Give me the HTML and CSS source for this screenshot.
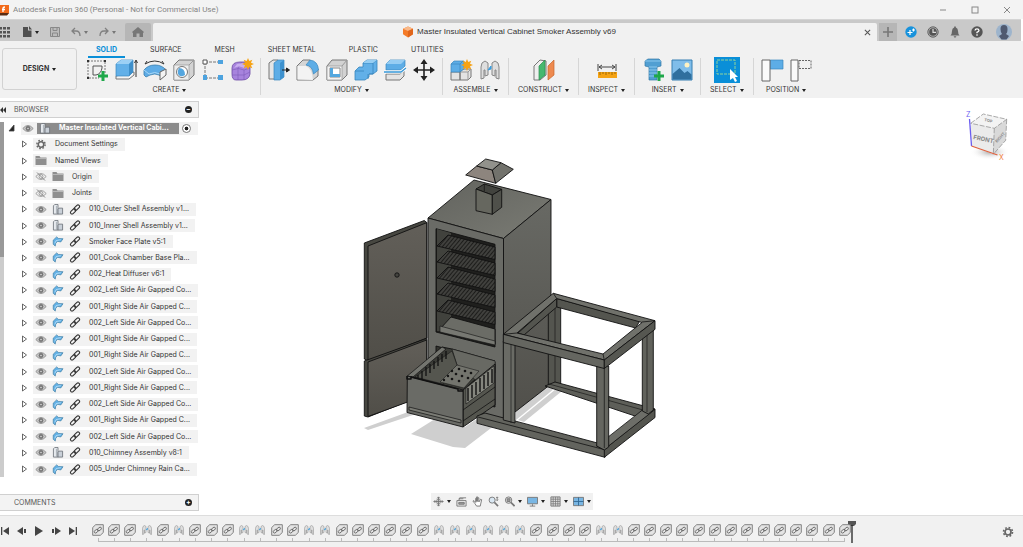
FILE: index.html
```html
<!DOCTYPE html>
<html lang="en">
    <head>
        <meta charset="UTF-8" />
        <meta name="viewport" content="width=device-width, initial-scale=1.0" />
        <title>Autodesk Fusion 360</title>
        <link rel="stylesheet" href="styles.css" />
    </head>
    <body>
        <!-- icons -->
        <svg class="sprite" aria-hidden="true">
            <symbol id="eye" viewBox="0 0 12 10">
                <path d="M.8 5Q6-1 11.200 5 6 11 .8 5z" fill="#c8c8c8" stroke="#959595" />
                <circle cx="6" cy="5" r="2.400" fill="#777" />
                <circle cx="6" cy="5" r=".8" fill="#ddd" />
            </symbol>
            <symbol id="eye-off" viewBox="0 0 12 10">
                <path d="M.8 5Q6-1 11.200 5 6 11 .8 5z" fill="none" stroke="#999" stroke-width=".9" />
                <circle cx="6" cy="5" r="2" fill="none" stroke="#999" stroke-width=".9" />
                <path d="M2 1l8 8" stroke="#888" />
            </symbol>
            <symbol id="folder" viewBox="0 0 12 10">
                <path d="M.5.5h4l1 1.500h6V9.500H.5z" fill="#8f8f8f" />
                <path d="M.5 3h11" stroke="#c8c8c8" stroke-width=".7" />
            </symbol>
            <symbol id="gear" viewBox="0 0 12 12">
                <circle cx="6" cy="6" r="3" fill="none" stroke="#666" stroke-width="1.700" />
                <circle cx="6" cy="6" r="4.500" fill="none" stroke="#666" stroke-width="1.600" stroke-dasharray="1.750 1.784" />
            </symbol>
            <symbol id="assembly" viewBox="0 0 12 12">
                <path d="M1 2l1.500-1.500H6V11H1z" fill="#e6eaee" stroke="#6b7178" stroke-width=".9" />
                <path d="M4.300 2v9" stroke="#9aa1a8" stroke-width=".8" />
                <path d="M6 6l1-1.500h4V11H6z" fill="#c9d0d8" stroke="#6b7178" stroke-width=".9" />
            </symbol>
            <symbol id="sheet" viewBox="0 0 12 12">
                <path d="M.8 4.500L4.500 1l2 1.700 5 .3-2.500 3.500-3.500-.7L3.500 8l-.5 3L.8 9z" fill="#62b1e6" stroke="#39789f" stroke-width=".7" />
                <path d="M2.500 8L4 5l5-1" fill="none" stroke="#d4ecfa" stroke-width=".7" />
            </symbol>
            <symbol id="link" viewBox="0 0 12 12">
                <g fill="none" stroke="#333" stroke-width="1.200">
                    <rect x="4.500" y="2.300" width="7" height="3.400" rx="1.700" transform="rotate(-45 8 4)" />
                    <rect x=".5" y="6.300" width="7" height="3.400" rx="1.700" transform="rotate(-45 4 8)" />
                </g>
            </symbol>
            <symbol id="tl-link" viewBox="0 0 12 12">
                <path d="M.7 3.500l3-2.800h7.600v7.800l-3 2.800H.7z" fill="#e4e4e4" stroke="#777" stroke-width=".9" />
                <g fill="none" stroke="#5e5e5e" stroke-width=".8">
                    <ellipse cx="4.200" cy="7.200" rx="2.200" ry="1.400" transform="rotate(-40 4.200 7.200)" />
                    <ellipse cx="7.500" cy="5" rx="2.200" ry="1.400" transform="rotate(-40 7.500 5)" />
                </g>
            </symbol>
            <symbol id="joint" viewBox="0 0 24 24">
                <path d="M3 21V9q0-5 4-6l3 2v12l-3 1v-6H6v8z" fill="#dedede" stroke="#868686" />
                <path d="M21 21V9q0-5-4-6l-3 2v12l3 1v-6h1v8z" fill="#dedede" stroke="#868686" />
                <path d="M13 8l-3 4 3-1z" fill="#3b9ddd" stroke="#3b9ddd" />
            </symbol>
            <symbol id="plus" viewBox="0 0 10 10">
                <path d="M5 0v10M0 5h10" stroke="#1fa84a" stroke-width="3" />
            </symbol>
            <symbol id="spark" viewBox="0 0 12 12">
                <path d="M6 0l1.300 3 3-1.300L9 4.700 12 6 9 7.300l1.300 3L7.300 9 6 12 4.700 9l-3 1.300L3 7.300 0 6l3-1.300-1.300-3 3 1.300z" fill="#f6a315" />
            </symbol>
        </svg>

        <header class="titlebar">
            <svg class="logo" viewBox="0 0 10 12"><path d="M0 1h9v8l-2 2H0z" fill="#f26a1b" /><path d="M0 9h9l-2 2.500H0z" fill="#5a2b12" /><path d="M3 8V4.500q0-1.500 2-1.500M2 5.500h3" fill="none" stroke="#fff" stroke-width="1.300" /></svg>
            <span class="app_name">Autodesk Fusion 360 (Personal - Not for Commercial Use)</span>
            <div class="win_btns">
                <button aria-label="Minimize"><svg viewBox="0 0 8 8"><path d="M1 4h6" /></svg></button>
                <button aria-label="Maximize"><svg viewBox="0 0 8 8"><rect x="1" y="1" width="6" height="6" /></svg></button>
                <button aria-label="Close window"><svg viewBox="0 0 8 8"><path d="M1 1l6 6M7 1L1 7" /></svg></button>
            </div>
        </header>

        <div class="docbar">
            <div class="quick">
                <button aria-label="Data panel"><svg width="11" height="12" viewBox="1 0 11 12" fill="#555"><path d="M0 1h3v2.500H0zM4 1h3v2.500H4zM8 1h3v2.500H8zM0 5h3v2.500H0zM4 5h3v2.500H4zM8 5h3v2.500H8zM0 9h3v2.500H0zM4 9h3v2.500H4zM8 9h3v2.500H8z" /></svg></button>
                <button class="caret" aria-label="File"><svg width="10" height="12" viewBox="0 0 10 12"><path d="M1 1h5v3.500h3.500V11H1z" fill="#505050" /><path d="M7 0l3 3.500H7z" fill="#505050" /></svg></button>
                <button aria-label="Save"><svg width="10" height="10" viewBox="0 0 10 10"><path d="M.5.5h9v9h-9z" fill="#bbb" stroke="#888" /><path d="M3 .5v3h4v-3M2.500 9.500V6h5v3.500" fill="none" stroke="#888" /></svg></button>
                <button class="caret light" aria-label="Undo"><svg width="10" height="10" viewBox="0 0 10 10"><path d="M4 1L1 4l3 3M1 4h4q4 0 4 5" fill="none" stroke="#808080" stroke-width="1.300" /></svg></button>
                <button class="caret light" aria-label="Redo"><svg width="10" height="10" viewBox="0 0 10 10"><path d="M6 1l3 3-3 3M9 4H5Q1 4 1 9" fill="none" stroke="#808080" stroke-width="1.300" /></svg></button>
            </div>
            <button class="home" aria-label="Home"><svg width="12" height="10" viewBox="0 0 12 10"><path d="M6 0l6 5-1 1v4H7.500V6.500h-3V10H1V6L0 5z" fill="#777" /></svg></button>
            <div class="doc_tab">
                <svg width="12" height="12" viewBox="0 0 12 12"><path d="M6 .5l5 2.200v5.600l-5 3.200-5-3.200V2.700z" fill="#f47b28" /><path d="M6 .5l5 2.200L6 5 1 2.700z" fill="#f9b98a" /><path d="M6 5l5-2.300v5.600l-5 3.200z" fill="#e0661c" /></svg>
                <span>Master Insulated Vertical Cabinet Smoker Assembly v69</span>
                <button class="close" aria-label="Close document"><svg width="7" height="7" viewBox="0 0 8 8"><path d="M1 1l6 6M7 1L1 7" stroke="#555" stroke-width="1.200" /></svg></button>
            </div>
            <button class="new_tab" aria-label="New tab"><svg width="10" height="10" viewBox="0 0 10 10"><path d="M5 0v10M0 5h10" stroke="#777" stroke-width="1.600" /></svg></button>
            <div class="account">
                <button aria-label="Extensions"><svg width="12" height="12" viewBox="0 0 12 12"><circle cx="6" cy="6" r="5.700" fill="#1792dc" /><path d="M5 4v5M2.500 6.500h5M8.500 2.500v3M7 4h3" stroke="#fff" stroke-width="1.200" /></svg></button>
                <button aria-label="Job status"><svg width="12" height="12" viewBox="0 0 12 12"><circle cx="6" cy="6" r="5.200" fill="#aaa" stroke="#666" /><circle cx="6" cy="6" r="3.800" fill="#555" /><path d="M6 3v3.300h3" fill="none" stroke="#ddd" stroke-width="1.200" /></svg></button>
                <button aria-label="Notifications"><svg width="12" height="12" viewBox="0 0 12 12"><path d="M1.500 9.500Q3 8 3 5q0-3 2.200-3.500V.5h1.600v1Q9 2 9 5q0 3 1.500 4.500zM4.500 10.200h3L6 12z" fill="#666" /></svg></button>
                <button aria-label="Help"><svg width="12" height="12" viewBox="0 0 12 12"><circle cx="6" cy="6" r="5.700" fill="#555" /><path d="M4 4.500Q4.200 2.800 6 2.800T8 4.500Q8 5.500 6 6.300v1M6 8.300v1.500" fill="none" stroke="#fff" stroke-width="1.300" /></svg></button>
                <button class="avatar" aria-label="Profile"><svg width="16" height="16" viewBox="0 0 16 16"><circle cx="8" cy="8" r="8" fill="#9db4cc" /><path d="M4.500 5q0-4 3.500-4t3.500 4-1.500 5l3 2-2.500 3.500h-5L3 12l3-2Q4.500 8 4.500 5z" fill="#4f5a70" /></svg></button>
            </div>
        </div>

        <div class="ribbon">
            <button class="design">DESIGN <i></i></button>
            <div class="ribbon_main">
                <nav class="tabs">
                    <button class="on">SOLID</button>
                    <button>SURFACE</button>
                    <button>MESH</button>
                    <button>SHEET METAL</button>
                    <button>PLASTIC</button>
                    <button>UTILITIES</button>
                </nav>
                <div class="groups">
                    <div class="group">
                        <div class="tools">
                            <button aria-label="Create sketch"><svg viewBox="0 0 24 24"><path d="M3 3h17v13M3 3v17h11" fill="none" stroke="#777" stroke-dasharray="2 1" /><path d="M8 17V8h9v2q-1 6-6 7H8" fill="none" stroke="#555" /><path d="M2 2h2v2H2zM19 2h2v2h-2zM2 19h2v2H2z" fill="#333" /><use href="#plus" x="13" y="13" width="10" height="10" /></svg></button>
                            <button aria-label="Extrude"><svg viewBox="0 0 24 24"><path d="M2 18v3h13l5-4v-3z" fill="#f4f4f4" stroke="#777" /><path d="M2 6l5-4h12v12l-4 4H2z" fill="#62b0e8" stroke="#3987bd" stroke-width=".7" /><path d="M2 6l5-4h12l-4 4z" fill="#9bd0f5" /><path d="M15 6l4-4v12l-4 4z" fill="#3e8fca" /><path d="M22 19V3M20.500 5L22 2l1.500 3" fill="none" stroke="#333" /></svg></button>
                            <button aria-label="Revolve"><svg viewBox="0 0 24 24"><path d="M1 12q4-5 11-5t11 5l-4 3v5l-3-3q-4-2-9 0l-4 2-2-2z" fill="#5eace6" stroke="#397fae" stroke-width=".8" /><path d="M1 12l5 4q6-3 11 0l6-4" fill="none" stroke="#a9d8f7" /><path d="M17 14l6-3v6l-6 5z" fill="#f4f4f4" stroke="#666" /><path d="M2 6q10-6 19 0M2 6l2-3M21 6l-2-3" fill="none" stroke="#333" /></svg></button>
                            <button aria-label="Hole"><svg viewBox="0 0 24 24"><path d="M2 7l5-5h15v15l-5 5H2z" fill="#d3d3d3" stroke="#777" /><path d="M2 7h15v15H2z" fill="#ededed" stroke="#999" stroke-width=".7" /><path d="M17 7l5-5" stroke="#999" /><circle cx="10" cy="14" r="5.500" fill="#fff" stroke="#777" /><path d="M7 10q6 0 6 7-5 3-7-1-1-3 1-6z" fill="#54a6df" /></svg></button>
                            <button aria-label="Pattern"><svg viewBox="0 0 24 24"><path d="M4 4v16h15M4 4h15" fill="none" stroke="#777" stroke-dasharray="3 1" /><path d="M2 2h4v4H2z" fill="#fff" stroke="#555" /><path d="M17 2h5v4h-5zM2 17h4v5H2zM17 17h5v5h-5z" fill="#4da3df" /></svg></button>
                            <button aria-label="Create form"><svg viewBox="0 0 24 24"><path d="M2 10q0-6 8-6h5l5 3v9q-1 6-8 6H6q-4 0-4-6z" fill="#a783dd" stroke="#6d4aa5" stroke-width=".8" /><path d="M2 12q7-3 12 0l6-2M2 17h12l6-3M8 10v12M14 12v10M8 10l4-6" fill="none" stroke="#7d5bb8" stroke-width=".6" /><path d="M4 10q5-3 10 0l5-2-6-3-6 1z" fill="#c9aef0" /><use href="#spark" x="12" y="0" width="12" height="12" /></svg></button>
                        </div>
                        <button class="caret">CREATE</button>
                    </div>
                    <div class="group">
                        <div class="tools">
                            <button aria-label="Press pull"><svg viewBox="0 0 24 24"><path d="M2 5l4-3h5v19H2z" fill="#e5e5e5" stroke="#777" /><path d="M7 5l4-3h6v17l-4 3H7z" fill="#5dade6" stroke="#3987bd" stroke-width=".7" /><path d="M13 5l4-3v17l-4 3z" fill="#3d91ce" /><path d="M15 12h5M19.500 10l3 2-3 2z" stroke="#222" fill="#222" /></svg></button>
                            <button aria-label="Fillet"><svg viewBox="0 0 24 24"><path d="M1 22V8l6-6h7l8 9v7l-5 4z" fill="#d5d5d5" stroke="#777" /><path d="M1.500 21.500V8H10q6 2 7 14z" fill="#f3f3f3" /><path d="M10 7l4-5q8 1 8.500 10l-5 4q-1-8-7.500-9z" fill="#5dade6" stroke="#3987bd" stroke-width=".7" /></svg></button>
                            <button aria-label="Shell"><svg viewBox="0 0 24 24"><path d="M2 8l5-6h15v15l-5 5H2z" fill="#d2d2d2" stroke="#777" /><path d="M2 8h15v14H2z" fill="#f3f3f3" stroke="#999" stroke-width=".8" /><path d="M17 8l5-6" stroke="#999" /><path d="M5 10h10v9H5z" fill="#fff" stroke="#888" /><path d="M5 10h3v6h7v3H5z" fill="#53a7df" /></svg></button>
                            <button aria-label="Combine"><svg viewBox="0 0 24 24"><path d="M1 13l4-4h4V5l4-3h10v11l-4 3h-4v3l-4 3H1z" fill="#62b0e8" stroke="#3987bd" stroke-width=".8" /><path d="M9 5h10v11h-4M19 5l4-3M1 13h9M14 16v5" fill="none" stroke="#3987bd" stroke-width=".8" /><path d="M9 5l4-3h10l-4 3z" fill="#97cef3" /></svg></button>
                            <button aria-label="Split body"><svg viewBox="0 0 24 24"><path d="M3 16h14l4-3v5l-4 4H3z" fill="#e4e4e4" stroke="#777" /><path d="M3 6l4-4h15v6l-4 4H3z" fill="#5dade6" stroke="#3987bd" stroke-width=".7" /><path d="M3 6l4-4h15l-4 4z" fill="#96cdf3" /><path d="M1 14h17l5-4" fill="none" stroke="#fff" stroke-width="3" /><path d="M1 14h17l5-4" fill="none" stroke="#3798d8" stroke-width="1.300" /></svg></button>
                            <button aria-label="Move"><svg viewBox="0 0 24 24"><path d="M12 3v18M3 12h18" stroke="#222" stroke-width="1.600" /><path d="M12 1l3.500 5h-7zM12 23l3.500-5h-7zM1 12l5-3.500v7zM23 12l-5-3.500v7z" fill="#222" /></svg></button>
                        </div>
                        <button class="caret">MODIFY</button>
                    </div>
                    <div class="group">
                        <div class="tools">
                            <button aria-label="New component"><svg viewBox="0 0 24 24"><path d="M2 14h9v8H2zM11 14l3-3h8v8l-3 3h-8z" fill="#e3e3e3" stroke="#777" /><path d="M11 14h8v8M19 14l3-3" fill="none" stroke="#999" /><path d="M2 6l3-3h10v8l-4 3H2z" fill="#5dade6" stroke="#3987bd" stroke-width=".7" /><path d="M2 6h9v8M11 6l3-3" fill="none" stroke="#3987bd" stroke-width=".7" /><use href="#spark" x="12" y="1" width="12" height="12" /></svg></button>
                            <button aria-label="Joint"><svg viewBox="0 0 24 24"><use href="#joint" width="24" height="24" /></svg></button>
                        </div>
                        <button class="caret">ASSEMBLE</button>
                    </div>
                    <div class="group">
                        <div class="tools">
                            <button aria-label="Offset plane"><svg viewBox="0 0 24 24"><path d="M2 8l6-6 6 1v14l-6 5H2z" fill="#eee" stroke="#777" /><path d="M7 8l6-6v15l-6 5z" fill="#47b86f" stroke="#2a8e4e" stroke-width=".7" /><path d="M16 8l6-6v15l-6 5z" fill="#ee8a4f" stroke="#c6642b" stroke-width=".7" /></svg></button>
                        </div>
                        <button class="caret">CONSTRUCT</button>
                    </div>
                    <div class="group">
                        <div class="tools">
                            <button aria-label="Measure"><svg viewBox="0 0 24 24"><path d="M3 6v7M21 6v7M4 9h16M7 7L4 9l3 2M17 7l3 2-3 2" fill="none" stroke="#444" /><path d="M3 14h19v6H3z" fill="#f5a314" /><path d="M5 14v3M8 14v2M11 14v3M14 14v2M17 14v3M20 14v2" stroke="#8c5a00" stroke-width=".8" /></svg></button>
                        </div>
                        <button class="caret">INSPECT</button>
                    </div>
                    <div class="group">
                        <div class="tools">
                            <button aria-label="Insert fastener"><svg viewBox="0 0 24 24"><path d="M4 3l3-2h11l2 2v5l-4 1v13H8V9L4 8z" fill="#519fd2" stroke="#337aa8" stroke-width=".7" /><path d="M4 3h16M8 9h8M8 12h8M8 15h8M8 18h8" stroke="#8cc8ee" /><use href="#plus" x="13" y="13" width="10" height="10" /></svg></button>
                            <button aria-label="Insert image"><svg viewBox="0 0 24 24"><path d="M2 2h20v20H2z" fill="#7fbdea" stroke="#377fb2" /><path d="M2.500 16l7-6 5 5 3-2 4 3.500v5h-19z" fill="#2f6f9e" /><circle cx="17" cy="7" r="2.500" fill="#fff2c2" /></svg></button>
                        </div>
                        <button class="caret">INSERT</button>
                    </div>
                    <div class="group select">
                        <div class="tools">
                            <button aria-label="Select"><svg viewBox="0 0 26 26"><path d="M0 0h26v26H0z" fill="#0a8fd8" /><path d="M3 3h18v14H3z" fill="none" stroke="#8fd39a" stroke-dasharray="3 1" /><path d="M16 12v11l3-2 2 4 2-1-2-4h3z" fill="#fff" /></svg></button>
                        </div>
                        <button class="caret">SELECT</button>
                    </div>
                    <div class="group">
                        <div class="tools">
                            <button aria-label="Capture position"><svg viewBox="0 0 24 24"><path d="M10 2h13v9H10z" fill="#5dade6" stroke="#3987bd" stroke-width=".7" /><path d="M2 2h8v21H2z" fill="#fafafa" stroke="#666" /></svg></button>
                            <button aria-label="Revert position"><svg viewBox="0 0 24 24"><path d="M10 2.500h12v8H10z" fill="none" stroke="#666" stroke-dasharray="2 1" /><path d="M2 2h7v21H2z" fill="#fafafa" stroke="#666" /></svg></button>
                        </div>
                        <button class="caret">POSITION</button>
                    </div>
                </div>
            </div>
        </div>

        <main class="workspace">
            <aside class="panel">
                <div class="panel_head"><svg width="6" height="6" viewBox="0 0 6 6"><path d="M3 0v6L0 3zM6 0v6L3 3z" fill="#333" /></svg><span>BROWSER</span><button aria-label="Collapse browser">&minus;</button></div>
                <div class="tree_wrap">
                    <div class="scroll"></div>
                    <ul class="tree" id="tree"></ul>
                </div>
                <div class="panel_head"><span>COMMENTS</span><button aria-label="Add comment">+</button></div>
            </aside>

            <svg class="model" viewBox="200 98 823 417" role="img" aria-label="Smoker cabinet model">
                <defs>
                    <linearGradient id="side" x1="0" y1="0" x2="0" y2="1"><stop offset="0" stop-color="#686964" /><stop offset="1" stop-color="#504f4a" /></linearGradient>
                    <linearGradient id="top" x1="0" y1="0" x2="1" y2="1"><stop offset="0" stop-color="#62635e" /><stop offset="1" stop-color="#7a7b74" /></linearGradient>
                    <linearGradient id="door" x1="0" y1="0" x2="0" y2="1"><stop offset="0" stop-color="#625f59" /><stop offset="1" stop-color="#504e48" /></linearGradient>
                    <pattern id="rods" width="3" height="3" patternUnits="userSpaceOnUse" patternTransform="rotate(40)"><rect width="3" height="3" fill="#1d1d1b" /><path d="M1 0v3" stroke="#6a6b65" stroke-width=".9" /></pattern>
                </defs>
                <!-- shadows -->
                <g fill="#cfcfcf">
                    <path d="M364 428l44-16 8 2-48 16z" />
                    <path d="M411 434l24-15 30 8 10-7 20 5-30 23-12-1z" />
                    <path d="M516 409l33-23 6 2-39 32zM518 420l38-31 6 2-38 31z" />
                </g>
                <g stroke="#111" stroke-width=".9" stroke-linejoin="round">
                    <!-- doors -->
                    <path d="M364.300 243l60-22.500 2.500 2v115.500l-60 22-2.500-1z" fill="#474741" />
                    <path d="M368 246l58.700-23.300V338L368 361z" fill="url(#door)" />
                    <path d="M364.300 361l62.400-22.500V394L368 417l-3.700-1z" fill="#474741" />
                    <path d="M368 362l58.700-22V395L368 416.500z" fill="url(#door)" />
                    <circle cx="397" cy="275" r="2.200" fill="#44443f" />
                    <!-- cabinet -->
                    <path d="M474 180l77 19.500-47.500 39L428 218z" fill="url(#top)" />
                    <path d="M503.500 238.500l47.500-39V384l-47.500 37z" fill="url(#side)" />
                    <path d="M428 218l75.500 20.500V421L428 402z" fill="#6a6b66" />
                    <path d="M436 228.700l59 15.600V347l-59-15z" fill="#1f1f1d" />
                    <path d="M437 229l14 4v99l-14-1z" fill="#41423d" stroke="none" />
                    <g fill="url(#rods)">
                        <path d="M437 246l11-11 47 12v12.500z" />
                        <path d="M437 262l11-11 47 12v12.500z" />
                        <path d="M437 278l11-11 47 12v12.500z" />
                        <path d="M437 294l11-11 47 12v12.500z" />
                        <path d="M437 311l11-11 47 12v12.500z" />
                    </g>
                    <path d="M440 329l11-12 44 12v15z" fill="#6b6c66" />
                    <path d="M440 326v6l55 13v-4z" fill="#777872" stroke-width=".6" />
                    <path d="M436 346l59 15.700V407l-59-15z" fill="#33342f" />
                    <!-- fire box drawer -->
                    <path d="M442 347l10 2 43 12-32 30-55-14z" fill="#3b3c37" />
                    <path d="M452 349l43 12v12l-17 9-21-17z" fill="#686963" stroke-width=".5" />
                    <path d="M452 351l5 14-14 19-28-7z" fill="#55564f" stroke-width=".5" />
                    <path d="M457 365l22 6-15 17-24-6z" fill="#73746d" stroke-width=".5" />
                    <g fill="#151515" stroke="none">
                        <circle cx="452" cy="371" r="1.200" /><circle cx="448" cy="376" r="1.200" /><circle cx="444" cy="380" r="1.200" />
                        <circle cx="459" cy="369" r="1.300" /><circle cx="465" cy="371" r="1.300" /><circle cx="471" cy="373" r="1.300" />
                        <circle cx="456" cy="374" r="1.300" /><circle cx="462" cy="376" r="1.300" /><circle cx="468" cy="378" r="1.300" />
                        <circle cx="452" cy="379" r="1.300" /><circle cx="459" cy="381" r="1.300" />
                    </g>
                    <path d="M407.300 376l34.700-29 4 2-33 28z" fill="#74756f" stroke-width=".7" />
                    <path d="M418 375v7M422 371v9M426 367v9M430 364v9M434 361v8M438 357v9M442 354v8M446 351v8" stroke-width="1.300" />
                    <path d="M463 390l32-26v41l-32 22z" fill="#55564f" />
                    <path d="M466 388l28-22v17l-28 21z" fill="#85867e" stroke-width=".6" />
                    <path d="M468 388v13M472 385v13M476 382v13M480 378v14M484 375v14M488 372v14M492 369v14" stroke-width="1.400" />
                    <path d="M463 410l32-23M463 421l32-22" stroke-width=".8" />
                    <path d="M407.300 376l55.700 14v37l-56-14.500z" fill="#6a6b66" />
                    <path d="M409 407l52 13v3l-52-13z" fill="#7b7c75" stroke-width=".7" />
                    <path d="M407 376v3h4v-2l47 12v2h5" fill="none" stroke-width="1.500" />
                    <!-- stand, back and bottom rails -->
                    <path d="M548.300 300h12.400v90l-12.400-4z" fill="#54554f" />
                    <path d="M555 302v85" stroke-width=".6" />
                    <path d="M545 386l10-4 100 27-14 9z" fill="#5e5f59" />
                    <path d="M549 384l94 26" stroke-width=".6" />
                    <path d="M477 416l8-3 120 32v12.300l-128-34z" fill="#63645e" />
                    <path d="M478 417l126 32.500" stroke-width=".8" />
                    <path d="M604.300 449.300L655 409v8.500l-50.700 39.800z" fill="#54554f" />
                    <path d="M596.700 446l47-37 11.300.5-50.700 39.800z" fill="#6d6e68" stroke-width=".8" />
                    <path d="M642.300 328h11v82l-5 4-6-3z" fill="#61625c" />
                    <path d="M647 330v82" stroke-width=".6" />
                    <path d="M503.300 341H515v82l-11.700-3z" fill="#6a6b65" />
                    <path d="M511 343v80" stroke-width=".6" />
                    <path d="M596.700 366h12v81l-4.400 3-7.600-4z" fill="#656660" />
                    <path d="M604.300 368v80" stroke-width=".7" />
                    <!-- stand, top ring -->
                    <path d="M556.700 298.500l83 22.500-4 7-79-21z" fill="#54554f" />
                    <path d="M518 333l38.700-34.500V307L524 335z" fill="#54554f" />
                    <path fill-rule="evenodd" d="M503.300 334.300l50-41 101.700 27.400-50.700 39.300zM517 333l86 21 39-31.500-85.300-24z" fill="#70716b" />
                    <path d="M503.300 334.300l101 25.700v8.500l-101-26z" fill="#656660" />
                    <path d="M604.300 360l50.700-39.300v8.600l-50.700 39.200z" fill="#565751" />
                    <path d="M603 354l1.300 6M642 322l13-1.300M556.700 298.500l-3.400-5.200M517 333l-13.700 1.300" stroke-width=".8" />
                    <!-- chimney and rain cap -->
                    <path d="M476 189l8.300-5 17.400 5.300-9.400 5.700z" fill="#42433e" />
                    <path d="M484.300 184v7" stroke-width=".7" />
                    <path d="M476 189l16.300 6v19.300L476 210.700z" fill="#66675f" />
                    <path d="M492.300 195l9.400-5.700v18l-9.400 7z" fill="#4f504a" />
                    <path d="M476.700 166l15.600 4 3.400 13.300-30-8.300z" fill="#8d857e" />
                    <path d="M492.300 170l8.700-7.300 12.300 6.600-17.600 14z" fill="#72726c" />
                    <path d="M485.700 159l15.300 3.700-8.700 7.300-15.600-4z" fill="#92928c" />
                </g>
            </svg>

            <svg class="cube" width="46" height="56" viewBox="962 107 46 56" role="img" aria-label="View cube">
                <defs><radialGradient id="glow"><stop offset="0" stop-color="#aaa" /><stop offset="1" stop-color="#fff" stop-opacity="0" /></radialGradient></defs>
                <ellipse cx="990" cy="152" rx="20" ry="8" fill="url(#glow)" />
                <path d="M970.700 123.300L983.300 114l23.400 5.300-12.400 9z" fill="#f3f3f3" />
                <path d="M970.700 123.300l23.600 5-1 26-21.600-8.300z" fill="#ebebeb" />
                <path d="M994.300 128.300l12.400-9-1 21-12.400 14z" fill="#d9d9d9" />
                <path d="M970.700 123.300L983.300 114l23.400 5.300-12.400 9zM994.300 128.300l-1 26M1006.700 119.300l-1 21-12.400 14" fill="none" stroke="#888" stroke-width=".7" stroke-dasharray="5 1.500" />
                <path d="M969.500 119l2 27" stroke="#6a5cf0" stroke-width="1.300" />
                <path d="M971.500 146l26 9" stroke="#e0603c" stroke-width="1.100" />
                <text x="973" y="139" transform="rotate(12 973 139)" class="cube_face">FRONT</text>
                <text x="984" y="121" transform="rotate(12 984 121)" class="cube_top">TOP</text>
                <text x="997" y="143" transform="rotate(-48 997 143)" class="cube_side">RIGHT</text>
                <text x="966" y="117" class="axis z">Z</text>
                <text x="999" y="160" class="axis x">X</text>
            </svg>

            <div class="navbar">
                <button class="caret" aria-label="Orbit"><svg viewBox="0 0 12 12"><path d="M6 1v10M1 6h10M4.500 2.500L6 1l1.500 1.500M4.500 9.500L6 11l1.500-1.500M2.500 4.500L1 6l1.500 1.500M9.500 4.500L11 6 9.500 7.500" /><ellipse cx="6" cy="6" rx="2" ry="3" /></svg></button>
                <button aria-label="Look at"><svg viewBox="0 0 12 12"><path d="M1 5h10v6H1zM3 5l1-3h7M3 3h5" /><path d="M3 7h6v2H3z" fill="#999" /></svg></button>
                <button aria-label="Pan"><svg viewBox="0 0 12 12"><path d="M3 8L1 5.500l1-.5 2 2V2.500h1V6 1h1.200v5V2h1.300v4.500L9.500 3.500l1 .5L9 11H5z" fill="#fff" /></svg></button>
                <button aria-label="Zoom"><svg viewBox="0 0 12 12"><circle cx="4.500" cy="4.500" r="3.300" fill="#d9e7f2" /><path d="M7 7l4 4" stroke-width="1.800" /><path d="M10 1v4M9 2l1-1 1 1M9 4l1 1 1-1" /></svg></button>
                <button class="caret" aria-label="Fit"><svg viewBox="0 0 12 12"><circle cx="5" cy="4.500" r="3.500" fill="#ddd" /><path d="M3.500 3h3v3h-3z" fill="#999" /><path d="M7.500 7l4 4" stroke-width="1.800" /></svg></button>
                <button class="caret" aria-label="Display settings"><svg viewBox="0 0 12 12"><path d="M.5 1.500h11v7H.5z" fill="#79b6e3" /><path d="M6 9v2M3 11h6" /></svg></button>
                <button class="caret" aria-label="Grid and snaps"><svg viewBox="0 0 12 12"><path d="M1 1h10v10H1z" fill="#ddd" /><path d="M1 3.500h10M1 6h10M1 8.500h10M3.500 1v10M6 1v10M8.500 1v10" stroke-width=".8" /></svg></button>
                <button class="caret" aria-label="Viewports"><svg viewBox="0 0 12 12"><path d="M.5 1.500h11v9H.5z" fill="#79b6e3" /><path d="M6 1.500v9M.5 6h11" stroke="#326b98" /></svg></button>
            </div>
        </main>

        <footer class="timeline">
            <div class="player">
                <button aria-label="To start"><svg viewBox="0 0 10 10"><path d="M1 1h1.300v8H1zM9 1v8L3 5z" /></svg></button>
                <button aria-label="Step back"><svg viewBox="0 0 10 10"><path d="M6 1v8L0 5zM7 3h2v4H7z" /></svg></button>
                <button aria-label="Play"><svg viewBox="0 0 10 10"><path d="M1 0l8 5-8 5z" /></svg></button>
                <button aria-label="Step forward"><svg viewBox="0 0 10 10"><path d="M4 1v8l6-4zM1 3h2v4H1z" /></svg></button>
                <button aria-label="To end"><svg viewBox="0 0 10 10"><path d="M7.700 1H9v8H7.700zM1 1v8l6-4z" /></svg></button>
            </div>
            <div class="track" id="track"></div>
            <svg class="marker" width="8" height="22" viewBox="0 0 8 22"><path d="M0 0h8v3L6 5H2L0 3z" fill="#555" /><path d="M4 4v18" stroke="#222" stroke-width="1.300" /></svg>
            <button class="settings" aria-label="Timeline settings"><svg width="12" height="12"><use href="#gear" /></svg></button>
        </footer>

        <script src="script.js"></script>
    </body>
</html>
```

FILE: styles.css
```css
* {
    box-sizing: border-box;
    margin: 0px;
    padding: 0px;
}

body {
    display: flex;
    flex-direction: column;
    height: 100vh;
    overflow: hidden;
    background-color: #fff;
    color: #333;
    font-family: Inter, "Liberation Sans", sans-serif;
    font-size: 7px;
    line-height: 10px;
}

button {
    border: none;
    background: none;
    color: inherit;
    font: inherit;
    cursor: pointer;
}
svg {
    display: block;
    flex-shrink: 0;
}
.sprite {
    position: absolute;
    width: 0px;
    height: 0px;
}
.caret {
    display: flex;
    align-items: center;
    gap: 3px;
}
.caret::after,
.design i {
    content: "";
    border: 2px solid transparent;
    border-top: 3px solid #222;
    border-bottom: none;
}
.caret.light::after {
    border-top-color: #777;
}

/* title bar */
.titlebar {
    display: flex;
    align-items: center;
    height: 19px;
    background-color: #f3f3f3;
}
.logo {
    width: 10px;
    height: 12px;
}
.app_name {
    flex: 1;
    margin-left: 3px;
    color: #858585;
    font-family: Roboto, sans-serif;
    font-size: 8px;
}
.win_btns {
    display: flex;
    gap: 24px;
    margin-right: 12px;
}
.win_btns svg {
    width: 8px;
    height: 8px;
    fill: none;
    stroke: #888;
}

/* document bar */
.docbar {
    display: flex;
    height: 22px;
    margin-right: 2px;
    padding-top: 3px;
    background-color: #c9c9c9;
    border-top: 1px solid #d4d4d4;
}
.quick {
    display: flex;
    align-items: center;
    gap: 11px;
    width: 125px;
}
.home {
    display: flex;
    justify-content: center;
    align-items: center;
    width: 26px;
    margin-right: 2px;
    background-color: #b6b6b6;
    border-radius: 2px 2px 0px 0px;
}
.doc_tab {
    display: flex;
    flex: 1;
    align-items: center;
    justify-content: center;
    gap: 3px;
    position: relative;
    padding-right: 12px;
    background-color: #f1f1f1;
    border-radius: 2px 2px 0px 0px;
    font-family: "Liberation Sans", sans-serif;
    font-size: 8px;
}
.doc_tab .close {
    position: absolute;
    right: 6px;
}
.new_tab {
    display: flex;
    justify-content: center;
    align-items: center;
    width: 18px;
    margin-left: 2px;
    background-color: #b6b6b6;
}
.account {
    display: flex;
    align-items: center;
    gap: 10px;
    padding: 0px 9px 0px 8px;
}
.avatar {
    margin-left: 3px;
}

/* ribbon */
.ribbon {
    display: flex;
    height: 57px;
    background-color: #f1f1f1;
}
.design {
    display: flex;
    align-items: center;
    justify-content: center;
    gap: 3px;
    width: 75px;
    height: 42px;
    margin: 7px 2px 0px 2px;
    border: 1px solid #d2d2d2;
    border-radius: 3px;
    font-weight: bold;
}
.tabs {
    display: flex;
    gap: 17px;
    margin: 3px 0px 0px 9px;
}
.tabs button {
    padding: 1px 8px;
    border-bottom: 2px solid transparent;
}
.tabs .on {
    border-bottom-color: #0a8fd8;
    color: #0a8fd8;
    font-weight: bold;
}
.groups {
    display: flex;
}
.group {
    display: flex;
    flex-direction: column;
    align-items: center;
    gap: 3px;
    padding: 0px 6px;
    border-right: 1px solid #d6d6d6;
}
.group:last-child {
    border-right: none;
}
.group > .caret {
    padding: 0px 3px;
}
.tools {
    display: flex;
    gap: 5px;
}
.tools svg {
    width: 24px;
    height: 24px;
}
.select .tools svg {
    width: 26px;
    height: 26px;
    margin: -1px;
}

/* workspace */
.workspace {
    display: flex;
    flex: 1;
    position: relative;
    min-height: 0px;
}
.panel {
    display: flex;
    flex-direction: column;
    width: 200px;
    padding: 3px 0px 4px;
}
.panel_head {
    display: flex;
    align-items: center;
    width: 199px;
    height: 17px;
    padding-right: 6px;
    background-color: #f3f3f3;
    border: 1px solid #d0d0d0;
    border-left: none;
    color: #555;
}
.panel_head span {
    flex: 1;
    margin-left: 14px;
}
.panel_head svg + span {
    margin-left: 8px;
}
.panel_head button {
    width: 7px;
    height: 7px;
    background-color: #222;
    border-radius: 50%;
    color: #fff;
    font-weight: bold;
    line-height: 7px;
}
.tree_wrap {
    display: flex;
    flex: 1;
    min-height: 0px;
    padding: 2px 0px 17px;
}
.scroll {
    width: 4px;
    margin-top: 2px;
    background: linear-gradient(#999 38%, #ccc 38%);
}
.tree {
    display: flex;
    flex: 1;
    flex-direction: column;
    list-style: none;
}
.tree li {
    display: flex;
    flex: 1;
    align-items: center;
    padding-left: 17px;
}
.tree .root {
    padding-left: 4px;
}
.arrow {
    width: 12px;
}
.arrow svg {
    width: 7px;
    height: 8px;
    fill: none;
    stroke: #444;
    stroke-width: 0.8;
}
.chip {
    display: flex;
    align-items: center;
    gap: 5px;
    height: 13px;
    padding: 0px 7px 0px 2px;
    background-color: #f2f2f2;
    white-space: nowrap;
}
.chip svg {
    width: 12px;
    height: 11px;
}
.chip span {
    margin-left: 3px;
}
.root .chip {
    gap: 3px;
    margin-left: 1px;
    padding-left: 1px;
}
.root_name {
    display: flex;
    align-items: center;
    width: 142px;
    height: 11px;
    padding-left: 2px;
    background-color: #8c8c8c;
    color: #fff;
    font-weight: bold;
}
.root_name span {
    margin-left: 8px;
}
.chip input {
    appearance: none;
    width: 9px;
    height: 9px;
    border: 1px solid #777;
    border-radius: 50%;
    background: radial-gradient(#222 30%, #fff 45%);
}

.model {
    flex: 1;
    min-width: 0px;
    height: 100%;
}
.cube {
    position: absolute;
    top: 9px;
    right: 15px;
}
.cube text {
    fill: #888;
    font-weight: bold;
}
.cube .cube_face {
    font-size: 6px;
}
.cube .cube_top,
.cube .cube_side {
    font-size: 4px;
}
.cube .axis {
    font-size: 7px;
    font-weight: normal;
}
.cube .z {
    fill: #6a5cf0;
}
.cube .x {
    fill: #f07c3c;
}
.navbar {
    display: flex;
    align-items: center;
    gap: 5px;
    position: absolute;
    bottom: 5px;
    left: 50%;
    height: 17px;
    padding: 0px 2px;
    background-color: #f1f1f1;
    transform: translateX(-50%);
}
.navbar svg {
    width: 11px;
    height: 11px;
    fill: none;
    stroke: #777;
}

/* timeline */
.timeline {
    display: flex;
    height: 32px;
    background-color: #f1f1f1;
    border-top: 1px solid #ddd;
}
.player {
    display: flex;
    gap: 7px;
    width: 92px;
    height: 30px;
}
.player svg {
    width: 10px;
    height: 10px;
    fill: #444;
}
.track {
    display: flex;
    flex: 1;
    justify-content: space-between;
    height: 26px;
    padding-top: 8px;
    position: relative;
}
.track::after {
    content: "";
    position: absolute;
    right: 6px;
    bottom: 0px;
    left: 6px;
    height: 1px;
    background-color: #bbb;
}
.step {
    display: flex;
    flex-direction: column;
    align-items: center;
    justify-content: space-between;
}
.step svg {
    width: 12px;
    height: 12px;
}
.step::after {
    content: "";
    width: 1px;
    height: 4px;
    background-color: #bbb;
}
.marker {
    margin: 5px 0px 0px -3px;
}
.settings {
    margin: 0px 9px 0px 146px;
}
```

FILE: script.js
```javascript
// browser tree: [type, label]
const nodes = [
    ["gear", "Document Settings"],
    ["folder", "Named Views"],
    ["off", "Origin"],
    ["off", "Joints"],
    ["assembly", "010_Outer Shell Assembly v1..."],
    ["assembly", "010_Inner Shell Assembly v1..."],
    ["sheet", "Smoker Face Plate v5:1"],
    ["sheet", "001_Cook Chamber Base Pla..."],
    ["sheet", "002_Heat Diffuser v6:1"],
    ["sheet", "002_Left Side Air Gapped Co..."],
    ["sheet", "001_Right Side Air Gapped C..."],
    ["sheet", "002_Left Side Air Gapped Co..."],
    ["sheet", "001_Right Side Air Gapped C..."],
    ["sheet", "001_Right Side Air Gapped C..."],
    ["sheet", "002_Left Side Air Gapped Co..."],
    ["sheet", "001_Right Side Air Gapped C..."],
    ["sheet", "002_Left Side Air Gapped Co..."],
    ["sheet", "001_Right Side Air Gapped C..."],
    ["sheet", "002_Left Side Air Gapped Co..."],
    ["assembly", "010_Chimney Assembly v8:1"],
    ["sheet", "005_Under Chimney Rain Ca..."],
];
const icon = (id) => `<svg><use href="#${id}" /></svg>`;
const eye = (id) => `<button aria-label="Toggle visibility">${icon(id)}</button>`;

function icons(type) {
    if (type === "gear" || type === "folder") return icon(type);
    if (type === "off") return eye("eye-off") + icon("folder");
    return eye("eye") + icon(type) + icon("link");
}

let html = `<li class="root">
    <button class="arrow" aria-label="Collapse"><svg viewBox="0 0 7 8"><path d="M6 1v6H1z" fill="#222" /></svg></button>
    <div class="chip">${eye("eye")}
        <div class="root_name">${icon("assembly")}<span>Master Insulated Vertical Cabi...</span></div>
        <input type="radio" checked aria-label="Activate component" />
    </div>
</li>`;
nodes.forEach(([type, label]) => {
    html += `<li>
        <button class="arrow" aria-label="Expand"><svg viewBox="0 0 7 8"><path d="M1.500 1v6l4-3z" /></svg></button>
        <div class="chip">${icons(type)}<span>${label}</span></div>
    </li>`;
});
document.querySelector("#tree").innerHTML = html;

// timeline features, L = linked component, J = joint
const steps = "LLLJLJLLLJJLLJJLLLLLLJJJJJJLLLLJJLLLLLLLLLLLLLL";
document.querySelector("#track").innerHTML = [...steps]
    .map((s) => `<button class="step" aria-label="Feature">${icon(s === "L" ? "tl-link" : "joint")}</button>`)
    .join("");
```
